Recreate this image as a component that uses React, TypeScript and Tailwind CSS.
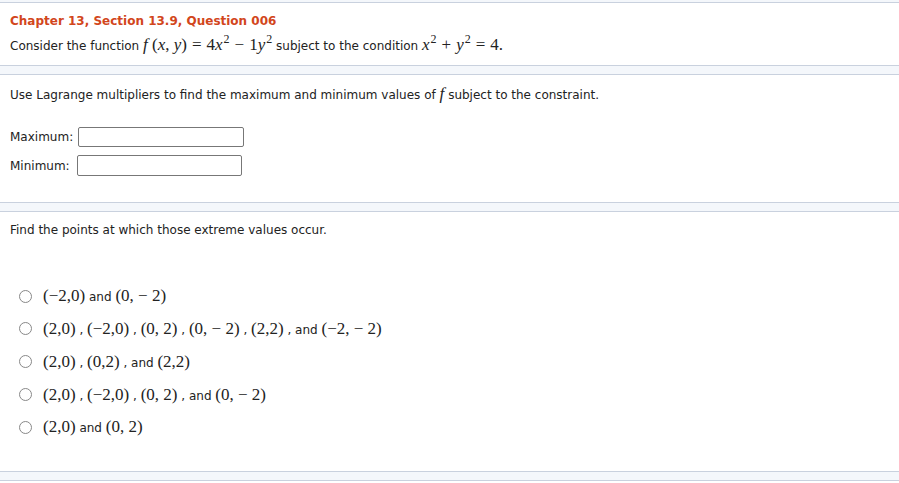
import React from "react";

const sans = "font-['Verdana','DejaVu_Sans',sans-serif]";
const serif = "font-['Liberation_Serif','Times_New_Roman',serif]";

function M({ children }: { children: React.ReactNode }) {
  return <span className={`${serif} text-[17px] text-[#222]`}>{children}</span>;
}
function I({ children }: { children: React.ReactNode }) {
  return <span className="italic">{children}</span>;
}
function Op({ children }: { children: React.ReactNode }) {
  return <span className="mx-[5px]">{children}</span>;
}
function Sup({ children }: { children: React.ReactNode }) {
  return <span className="text-[12px] relative -top-[7px] ml-[1px]">{children}</span>;
}

function Sep() {
  return <div className="h-[10px] bg-[#f4f7fb] border-y border-[#c9d1de]" />;
}

const options: React.ReactNode[] = [
  <>
    <M>(−2,0)</M> and <M>(0, − 2)</M>
  </>,
  <>
    <M>(2,0)</M> , <M>(−2,0)</M> , <M>(0, 2)</M> , <M>(0, − 2)</M> , <M>(2,2)</M> , and <M>(−2, − 2)</M>
  </>,
  <>
    <M>(2,0)</M> , <M>(0,2)</M> , and <M>(2,2)</M>
  </>,
  <>
    <M>(2,0)</M> , <M>(−2,0)</M> , <M>(0, 2)</M> , and <M>(0, − 2)</M>
  </>,
  <>
    <M>(2,0)</M> and <M>(0, 2)</M>
  </>,
];

export default function App() {
  return (
    <div className={`w-[899px] h-[483px] bg-white ${sans} text-[12px] text-[#222] overflow-hidden`}>
      <div className="h-[2px] bg-[#f4f7fb]" />
      <div className="border-t border-[#c9d1de] h-[63px] px-[10px] pt-[9px]">
        <div className="text-[12px] font-bold text-[#d2461c] leading-[18px]">Chapter 13, Section 13.9, Question 006</div>
        <div className="mt-[5px] leading-[20px] whitespace-nowrap">
          Consider the function{" "}
          <M>
            <I>f</I> (<I>x</I>, <I>y</I>)<Op>=</Op>4<I>x</I>
            <Sup>2</Sup>
            <Op>−</Op>1<I>y</I>
            <Sup>2</Sup>
          </M>{" "}
          subject to the condition{" "}
          <M>
            <I>x</I>
            <Sup>2</Sup>
            <Op>+</Op>
            <I>y</I>
            <Sup>2</Sup>
            <Op>=</Op>4.
          </M>
        </div>
      </div>
      <Sep />
      <div className="h-[127px] px-[10px] pt-[9px]">
        <div className="leading-[20px]">
          Use Lagrange multipliers to find the maximum and minimum values of{" "}
          <M>
            <I>f</I>
          </M>{" "}
          subject to the constraint.
        </div>
        <div className="mt-[22px] flex items-center gap-[5px] h-[20px]">
          <span>Maximum:</span>
          <div className="w-[166px] h-[20px] border border-[#777] rounded-[2px] bg-white" />
        </div>
        <div className="mt-[8px] flex items-center gap-[7px] h-[21px]">
          <span>Minimum:</span>
          <div className="w-[165px] h-[21px] border border-[#777] rounded-[2px] bg-white" />
        </div>
      </div>
      <Sep />
      <div className="h-[259px] px-[10px] pt-[8px]">
        <div className="leading-[20px]">Find the points at which those extreme values occur.</div>
        <div className="mt-[46px] flex flex-col gap-[12.75px] pl-[9px]">
          {options.map((o, i) => (
            <div key={i} className="flex items-center h-[20px] whitespace-nowrap">
              <span className="w-[13px] h-[13px] rounded-full border border-[#888] bg-white shrink-0" />
              <span className="ml-[11px]">{o}</span>
            </div>
          ))}
        </div>
      </div>
      <Sep />
    </div>
  );
}
